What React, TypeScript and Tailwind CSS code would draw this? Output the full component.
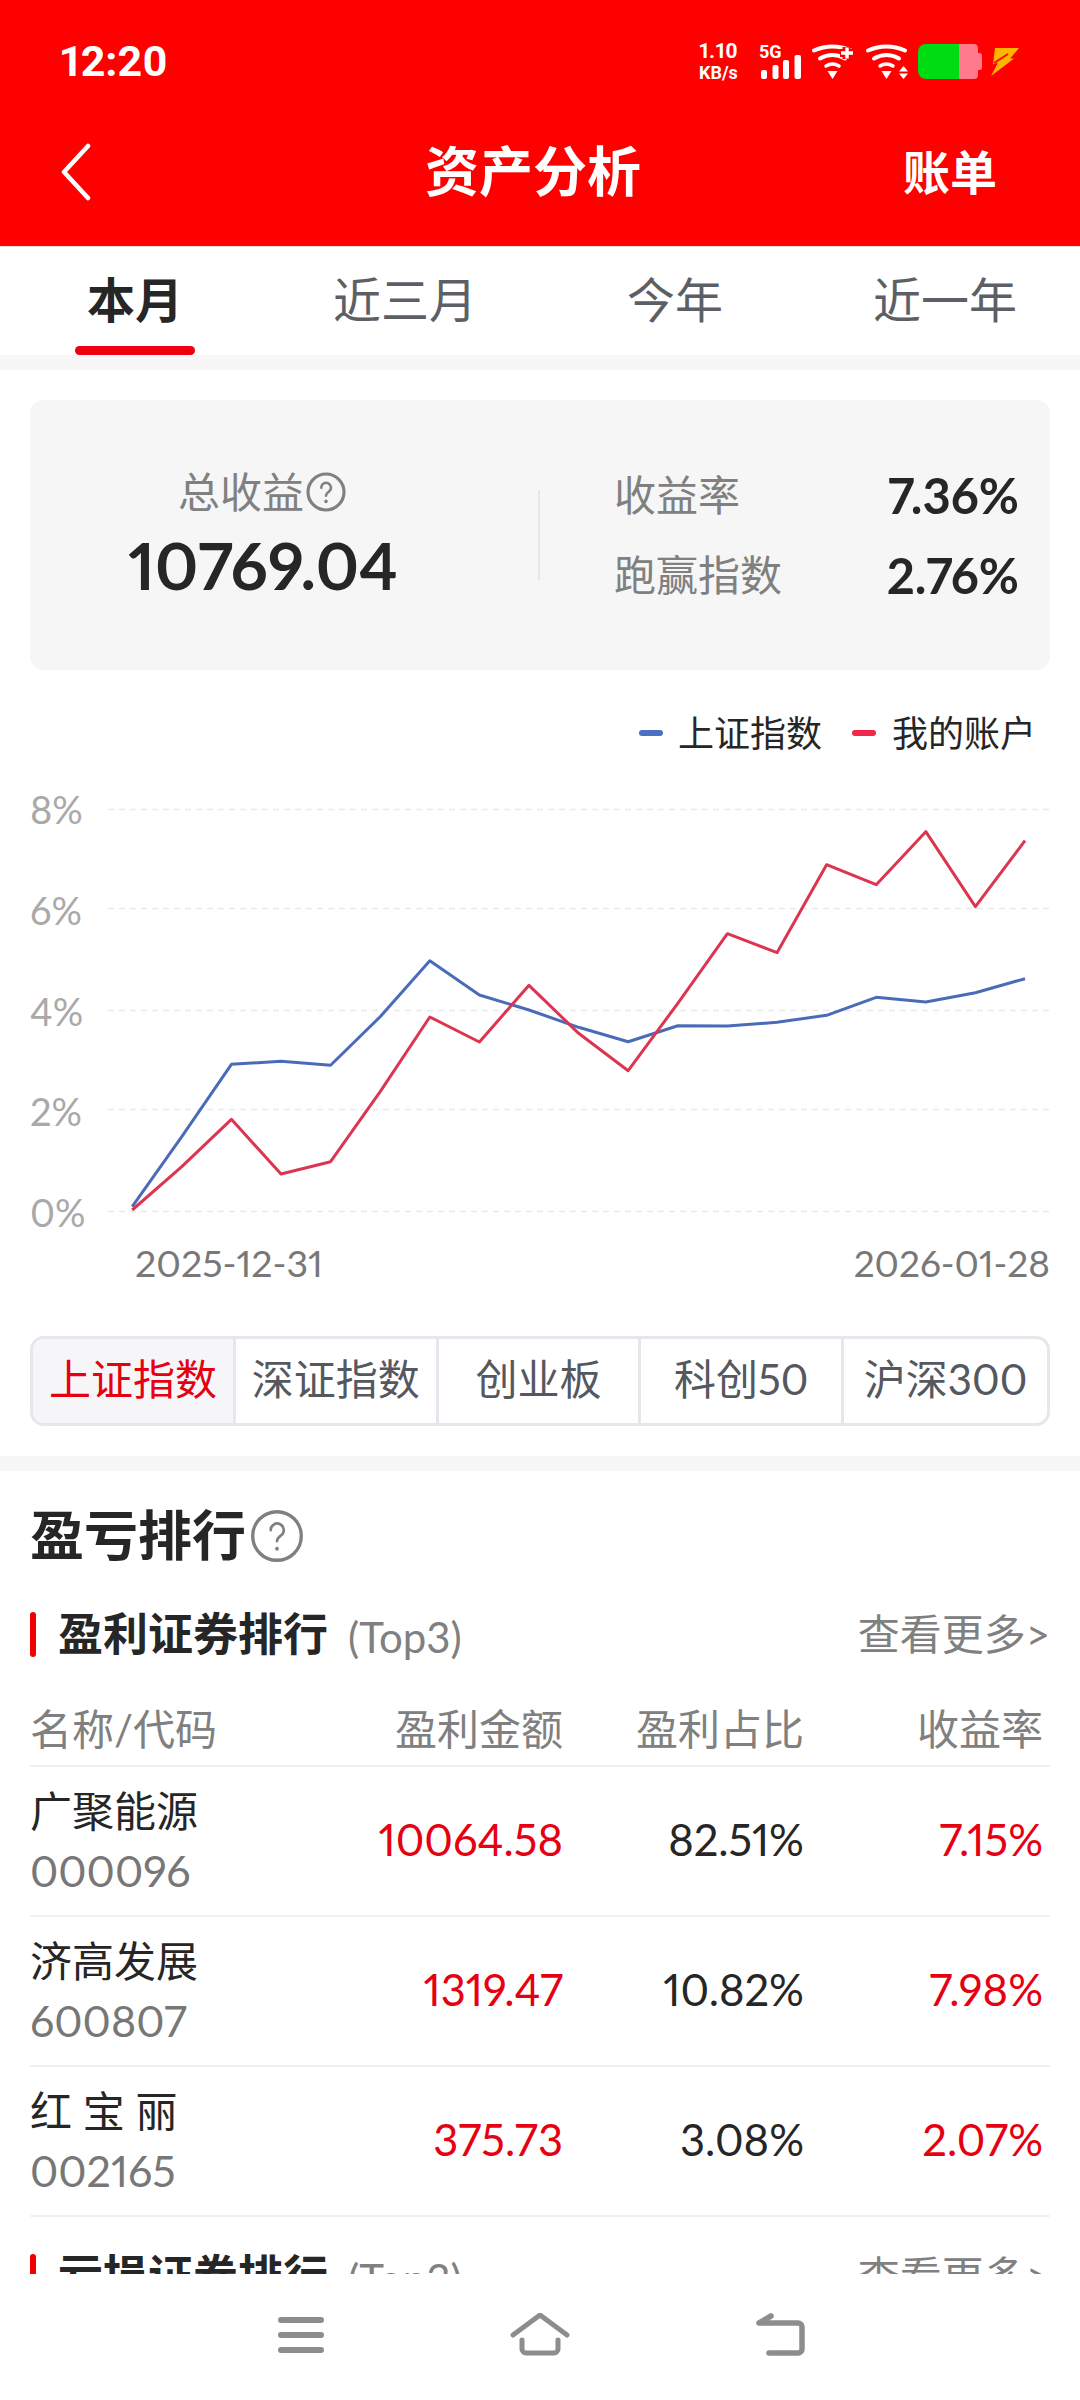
const tabs = ["本月", "近三月", "今年", "近一年"];
const indexes = ["上证指数", "深证指数", "创业板", "科创50", "沪深300"];
const yLabels = ["8%", "6%", "4%", "2%", "0%"];
const gridLines = [19, 118, 220, 319, 421];

const blueLine = [416.7, 346.7, 274.3, 271.3, 275.3, 226.7, 170.7, 205, 220, 237.3, 251.7, 235.7, 236, 232.3, 225.3, 207.3, 212, 202.7, 188.7];
const redLine = [420, 376.7, 329.3, 384, 371.7, 301.7, 227, 252, 195.3, 243.3, 280.7, 213.3, 143.7, 162.7, 74.7, 94.7, 41.7, 116.7, 50.7];

const rows = [
  { name: "广聚能源", code: "000096", amount: "10064.58", share: "82.51%", rate: "7.15%" },
  { name: "济高发展", code: "600807", amount: "1319.47", share: "10.82%", rate: "7.98%" },
  { name: "红 宝 丽", code: "002165", amount: "375.73", share: "3.08%", rate: "2.07%" },
];

function toPoints(values: number[]) {
  return values.map((y, i) => `${(24.2 + 49.6 * i).toFixed(1)},${y}`).join(" ");
}

function WifiIcon({ plus }: { plus?: boolean }) {
  return (
    <svg width="43" height="35" viewBox="0 0 43 35" fill="none" stroke="#fff" strokeLinecap="round">
      <path d="M3 6.5Q21.5 -1.5 40 6.5" strokeWidth="4" />
      <path d="M9 14.5Q21.5 7.5 34 14.5" strokeWidth="4" />
      <path d="M15 22Q21.5 18 28 22" strokeWidth="3.5" />
      <path d="M16.5 27H26.5L21.5 35Z" fill="#fff" stroke="none" />
      {plus ? (
        <>
          <path d="M29 9H42M35.5 3V15" stroke="#f00" strokeWidth="8" strokeLinecap="butt" />
          <path d="M30 9H42M36 3.5V14.5" strokeWidth="3.5" strokeLinecap="butt" />
        </>
      ) : (
        <path d="M38.5 22L34 27.5H43ZM34 29.5H43L38.5 35Z" fill="#fff" stroke="none" />
      )}
    </svg>
  );
}

function HelpIcon({ size, width }: { size: number; width: number }) {
  return (
    <svg width={size} height={size} viewBox="0 0 24 24" fill="none" stroke="#808080" strokeWidth={width} strokeLinecap="round">
      <circle cx="12" cy="12" r="10.8" />
      <path d="M9.2 9.4a2.9 2.9 0 1 1 4.6 2.3c-1.1.8-1.8 1.3-1.8 2.6" strokeWidth={width * 0.8} />
      <path d="M12 17.6v.1" strokeWidth={width * 1.1} />
    </svg>
  );
}

function SectionHeader({ title }: { title: string }) {
  return (
    <div className="mx-[30px] flex h-[45px] items-center">
      <div className="h-[45px] w-[6px] rounded-full bg-[#f00000]" />
      <span className="ml-[22px] text-[45px] leading-[45px] font-bold text-[#262626]">{title}</span>
      <span className="ml-[20px] mt-[6px] text-[42px] leading-[45px] text-[#808080]">(Top3)</span>
      <span className="ml-auto text-[42px] leading-[45px] text-[#808080]">查看更多&gt;</span>
    </div>
  );
}

export default function App() {
  return (
    <div className="flex h-[2400px] w-[1080px] flex-col overflow-hidden bg-white font-['Lato','Noto_Sans_CJK_SC',sans-serif] proportional-nums">
      <div className="h-[2274px] overflow-hidden">
        <header className="h-[246px] bg-[#ff0000] text-white">
          <div className="flex h-[122px] items-center pl-[60px] pr-[61px]">
            <span className="font-['Roboto',sans-serif] text-[43px] leading-none font-bold">12:20</span>
            <div className="ml-auto flex items-center">
              <div className="flex w-[43px] flex-col font-['Roboto',sans-serif] font-bold">
                <span className="text-[21px] leading-[21px]">1.10</span>
                <span className="mt-[2px] text-[18px] leading-[18px]">KB/s</span>
              </div>
              <div className="ml-[17px] flex w-[42px] flex-col">
                <span className="font-['Roboto',sans-serif] text-[18px] leading-[18px] font-bold">5G</span>
                <svg className="-mt-[6px] ml-[2px]" width="40" height="24" viewBox="0 0 40 24" fill="#fff">
                  <rect x="0" y="15" width="6" height="9" rx="2" />
                  <rect x="11.5" y="10" width="6" height="14" rx="2" />
                  <rect x="22" y="5" width="6" height="19" rx="2" />
                  <rect x="33.5" y="0" width="6.5" height="24" rx="2" />
                </svg>
              </div>
              <div className="ml-[10px]">
                <WifiIcon plus />
              </div>
              <div className="ml-[11px]">
                <WifiIcon />
              </div>
              <svg className="ml-[10px]" width="64" height="35" viewBox="0 0 64 35">
                <path d="M10 0H56a4 4 0 0 1 4 4V9h1.5a2.5 2.5 0 0 1 2.5 2.5V23.5a2.5 2.5 0 0 1 -2.5 2.5H60V31a4 4 0 0 1 -4 4H10Z" fill="#ff7a8c" />
                <path d="M8 0H41V35H8a8 8 0 0 1 -8 -8V8a8 8 0 0 1 8 -8Z" fill="#00dc14" />
              </svg>
              <svg className="ml-[8px]" width="29" height="29" viewBox="0 0 29 29">
                <path d="M5 1H29L20 11.5H24L1 29L8 15.5L3 17.5Z" fill="#ffb400" />
                <path d="M4 16L18 7" stroke="#ff0000" strokeWidth="1.8" />
              </svg>
            </div>
          </div>
          <div className="flex h-[100px] items-center pl-[60px]">
            <svg width="32" height="58" viewBox="0 0 32 58" fill="none" stroke="#fff" strokeWidth="4.5" strokeLinecap="round" strokeLinejoin="round">
              <path d="M28 3L4 29L28 55" />
            </svg>
            <h1 className="ml-[333px] text-[54px] leading-none font-bold">资产分析</h1>
            <span className="ml-auto pr-[83px] text-[47px] leading-none font-bold">账单</span>
          </div>
        </header>

        <div className="grid h-[109px] grid-cols-4 border-t border-[#f3dfe3]">
          {tabs.map((tab, i) => (
            <div key={tab} className="flex flex-col items-center pt-[26px]">
              <span className={i === 0 ? "text-[48px] leading-[54px] font-bold text-[#262626]" : "text-[48px] leading-[54px] text-[#5c5f66]"}>{tab}</span>
              {i === 0 && <div className="mt-[19px] h-[9px] w-[120px] rounded-full bg-[#ee0010]" />}
            </div>
          ))}
        </div>
        <div className="h-[15px] bg-[#f7f7f7]" />

        <div className="mx-[30px] mt-[30px] flex h-[270px] items-start rounded-[14px] bg-[#f6f6f6] pt-[70px]">
          <div className="flex w-[466px] flex-col items-center">
            <div className="-ml-[2px] flex h-[44px] items-center gap-[2px]">
              <span className="text-[42px] leading-[44px] text-[#808080]">总收益</span>
              <HelpIcon size={40} width={1.9} />
            </div>
            <span className="mt-[20px] text-[65px] leading-[62px] font-bold text-[#262626]">10769.04</span>
          </div>
          <div className="ml-[42px] mt-[20px] h-[90px] w-[2px] bg-[#e6e6e6]" />
          <div className="ml-[74px] mt-[3px] w-[405px]">
            <div className="flex h-[44px] items-center justify-between">
              <span className="text-[42px] leading-[44px] text-[#808080]">收益率</span>
              <span className="text-[49px] leading-[44px] font-bold text-[#262626]">7.36%</span>
            </div>
            <div className="mt-[36px] flex h-[44px] items-center justify-between">
              <span className="text-[42px] leading-[44px] text-[#808080]">跑赢指数</span>
              <span className="text-[49px] leading-[44px] font-bold text-[#262626]">2.76%</span>
            </div>
          </div>
        </div>

        <div className="mt-[43px] flex h-[40px] items-center justify-end pr-[44px] text-[36px] leading-[40px] text-[#262626]">
          <div className="h-[6px] w-[24px] rounded-full bg-[#4a6fc3]" />
          <span className="ml-[15px]">上证指数</span>
          <div className="ml-[30px] h-[6px] w-[24px] rounded-full bg-[#f0284a]" />
          <span className="ml-[16px]">我的账户</span>
        </div>

        <div className="mx-[30px] mt-[37px] flex h-[442px]">
          <div className="-mt-[1px] flex w-[78px] flex-col justify-between text-[38px] leading-[40px] text-[#a9a9a9]">
            {yLabels.map((label) => (
              <span key={label}>{label}</span>
            ))}
          </div>
          <svg width="942" height="442" viewBox="0 0 942 442" fill="none">
            {gridLines.map((y) => (
              <line key={y} x1="0" x2="942" y1={y + 0.5} y2={y + 0.5} stroke="#e9e9e9" strokeWidth="1.5" strokeDasharray="6 5" />
            ))}
            <polyline points={toPoints(blueLine)} stroke="#4a6cb8" strokeWidth="3" strokeLinejoin="round" />
            <polyline points={toPoints(redLine)} stroke="#dc3550" strokeWidth="3" strokeLinejoin="round" />
          </svg>
        </div>

        <div className="mt-[11px] flex h-[40px] items-center justify-between pl-[135px] pr-[30px] leading-[40px] text-[#787878]">
          <span className="text-[37.5px]">2025-12-31</span>
          <span className="text-[37px]">2026-01-28</span>
        </div>

        <div className="mx-[30px] mt-[53px] grid h-[90px] grid-cols-5 overflow-hidden rounded-[14px] border-[3px] border-[#e6e6ec]">
          {indexes.map((item, i) => (
            <div
              key={item}
              className={
                i === 0
                  ? "flex items-center justify-center border-r-[3px] border-[#e6e6ec] bg-[#f6f6f8] pb-[4px] text-[42px] leading-none text-[#e60012]"
                  : i === indexes.length - 1
                    ? "flex items-center justify-center pb-[4px] text-[42px] leading-none text-[#55585f]"
                    : "flex items-center justify-center border-r-[3px] border-[#e6e6ec] pb-[4px] text-[42px] leading-none text-[#55585f]"
              }
            >
              {item}
            </div>
          ))}
        </div>
        <div className="mt-[30px] h-[15px] bg-[#f7f7f7]" />

        <div className="mx-[30px] mt-[35px] flex h-[60px] items-center gap-[4px]">
          <h2 className="text-[54px] leading-[60px] font-bold text-[#262626]">盈亏排行</h2>
          <HelpIcon size={54} width={1.5} />
        </div>

        <div className="mt-[46px]">
          <SectionHeader title="盈利证券排行" />
        </div>

        <div className="mx-[30px] mt-[38px]">
          <div className="grid h-[72px] grid-cols-[310px_223px_241px_239px] items-center border-b-2 border-[#f0f0f0] pb-[2px] text-[42px] leading-[44px] text-[#808080]">
            <span>名称/代码</span>
            <span className="text-right">盈利金额</span>
            <span className="text-right">盈利占比</span>
            <span className="text-right">收益率</span>
          </div>
          {rows.map((row) => (
            <div key={row.code} className="grid h-[150px] grid-cols-[310px_223px_241px_239px] items-center border-b-2 border-[#f0f0f0]">
              <div className="flex flex-col">
                <span className="text-[42px] leading-[50px] text-[#262626]">{row.name}</span>
                <span className="mt-[10px] text-[43px] leading-[50px] text-[#777777]">{row.code}</span>
              </div>
              <span className="-mt-[2px] text-right text-[43.5px] leading-none text-[#e60012]">{row.amount}</span>
              <span className="-mt-[2px] text-right text-[43.5px] leading-none text-[#262626]">{row.share}</span>
              <span className="-mt-[2px] text-right text-[43.5px] leading-none text-[#e60012]">{row.rate}</span>
            </div>
          ))}
        </div>

        <div className="mt-[37px]">
          <SectionHeader title="亏损证券排行" />
        </div>
      </div>

      <nav className="flex flex-1 items-center justify-center gap-[186px] pb-[4px] pl-[4px]">
        <svg width="46" height="44" viewBox="0 0 46 44" fill="none" stroke="#8e8c8e" strokeWidth="6" strokeLinecap="round">
          <path d="M3 7H43M3 22H43M3 37H43" />
        </svg>
        <svg width="60" height="44" viewBox="0 0 60 44" fill="none" stroke="#8e8c8e" strokeWidth="5" strokeLinecap="round" strokeLinejoin="round">
          <path d="M3 22L30 2L57 22" />
          <path d="M12 27V36a4 4 0 0 0 4 4H44a4 4 0 0 0 4 -4V27" />
        </svg>
        <svg width="50" height="44" viewBox="0 0 50 44" fill="none" stroke="#8e8c8e" strokeWidth="5.5" strokeLinecap="round" strokeLinejoin="round">
          <path d="M15 3L3 10H42a4 4 0 0 1 4 4V36a4 4 0 0 1 -4 4H13" />
        </svg>
      </nav>
    </div>
  );
}
